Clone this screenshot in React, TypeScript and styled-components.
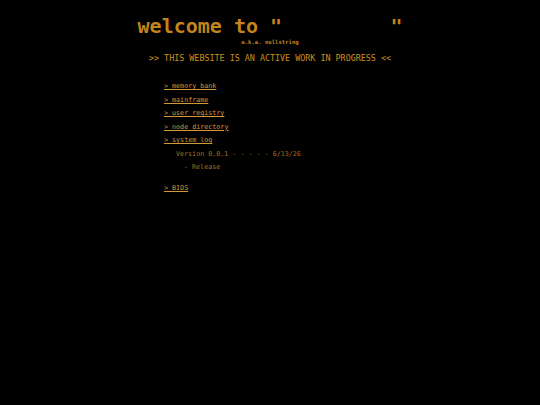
import { FC } from 'react';
import styled, { createGlobalStyle } from 'styled-components';

const GlobalStyle = createGlobalStyle`
    html, body {
        margin: 0;
        padding: 0;
        background: #000;
    }
    body {
        font-family: "DejaVu Sans Mono", "Liberation Mono", monospace;
        color: #c2841c;
    }
`;

const Page = styled.main`
    width: 540px;
    height: 405px;
    background: #000;
    padding-top: 14px;
    box-sizing: border-box;
`;

const Header = styled.header`
    display: flex;
    flex-direction: column;
    align-items: center;
`;

const Title = styled.h1`
    margin: 0;
    font-size: 20px;
    line-height: 25px;
    font-weight: bold;
    white-space: pre;
    color: #c2841c;
`;

const Aka = styled.span`
    font-size: 5.6px;
    line-height: 7px;
    font-weight: bold;
    color: #c2841c;
`;

const Banner = styled.p`
    margin: 6px 0 0;
    font-size: 8.4px;
    line-height: 12px;
    text-align: center;
    color: #c8901f;
`;

const Menu = styled.ul`
    list-style: none;
    margin: 16px 0 0;
    padding: 0 0 0 164px;
    display: flex;
    flex-direction: column;
`;

const MenuItem = styled.li<{ $gap?: number }>`
    font-size: 6.7px;
    line-height: 13.5px;
    margin-top: ${p => p.$gap ?? 0}px;
`;

const MenuLink = styled.a`
    color: #d49a3a;
    text-decoration: underline;
    cursor: pointer;
`;

const LogLine = styled.div<{ $indent: number }>`
    font-size: 6.7px;
    line-height: 13.5px;
    padding-left: ${p => p.$indent}px;
    color: #a8741c;
    white-space: pre;
`;

const links = ['memory bank', 'mainframe', 'user registry', 'node directory', 'system log'];

const App: FC = () => {
    return <>
        <GlobalStyle />
        <Page>
            <Header>
                <Title>{'welcome to "         "'}</Title>
                <Aka>a.k.a. nullstring</Aka>
                <Banner>{'>> THIS WEBSITE IS AN ACTIVE WORK IN PROGRESS <<'}</Banner>
            </Header>
            <Menu>
                {
                    links.map((link, index) =>
                        <MenuItem key={index}>
                            <MenuLink>{'> ' + link}</MenuLink>
                        </MenuItem>
                    )
                }
                <LogLine $indent={12}>Version 0.0.1 - - - - - 6/13/26</LogLine>
                <LogLine $indent={20}>- Release</LogLine>
                <MenuItem $gap={7}>
                    <MenuLink>{'> BIOS'}</MenuLink>
                </MenuItem>
            </Menu>
        </Page>
    </>
};

export default App;
